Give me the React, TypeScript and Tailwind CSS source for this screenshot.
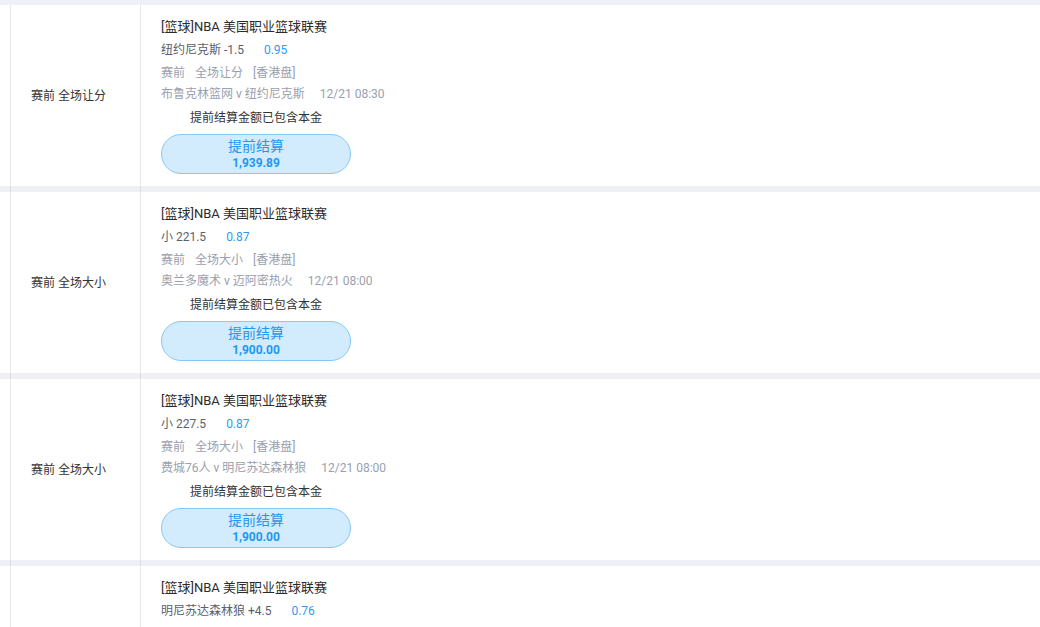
const bets = [
  {
    market: "赛前 全场让分",
    pick: "纽约尼克斯 -1.5",
    odds: "0.95",
    type: "全场让分",
    match: "布鲁克林篮网 v 纽约尼克斯",
    time: "12/21 08:30",
    amount: "1,939.89",
  },
  {
    market: "赛前 全场大小",
    pick: "小 221.5",
    odds: "0.87",
    type: "全场大小",
    match: "奥兰多魔术 v 迈阿密热火",
    time: "12/21 08:00",
    amount: "1,900.00",
  },
  {
    market: "赛前 全场大小",
    pick: "小 227.5",
    odds: "0.87",
    type: "全场大小",
    match: "费城76人 v 明尼苏达森林狼",
    time: "12/21 08:00",
    amount: "1,900.00",
  },
  {
    market: "赛前 全场让分",
    pick: "明尼苏达森林狼 +4.5",
    odds: "0.76",
    type: "全场让分",
    match: "明尼苏达森林狼 v 俄克拉荷马雷霆",
    time: "12/21 09:00",
    amount: "1,520.00",
  },
];

function Gap() {
  return (
    <div className="h-[6px] bg-[#eff0f5]">
      <div className="ml-[10px] h-full w-[131px] border-x border-[#dcdde3]" />
    </div>
  );
}

export default function App() {
  return (
    <div
      className="min-h-screen bg-[#eff0f5] pt-[5px]"
      style={{ fontFamily: "Roboto, 'Noto Sans CJK SC', sans-serif" }}
    >
      {bets.map((bet, i) => (
        <div key={i}>
          <div className="flex h-[181px] bg-white pl-[10px]">
            {/* 玩法 */}
            <div className="flex w-[131px] shrink-0 items-center border-x border-[#e6e7eb] pl-[20px] text-[12px] text-[#333]">
              {bet.market}
            </div>

            {/* 注单详情 */}
            <div className="flex flex-col pl-[20px] pt-[12px]">
              <div className="h-[20px] text-[13px] leading-[20px] text-[#2b2b2b]">
                [篮球]NBA 美国职业篮球联赛
              </div>
              <div className="mt-[3px] flex h-[20px] gap-[20px] text-[12px] leading-[20px]">
                <span className="text-[#5a606c]">{bet.pick}</span>
                <span className="text-[#2d9cf2]">{bet.odds}</span>
              </div>
              <div className="mt-[3px] flex h-[20px] gap-[10px] text-[12px] leading-[20px] text-[#9aa0ad]">
                <span>赛前</span>
                <span>{bet.type}</span>
                <span>[香港盘]</span>
              </div>
              <div className="mt-[1px] flex h-[20px] gap-[15px] text-[12px] leading-[20px] text-[#9aa0ad]">
                <span>{bet.match}</span>
                <span>{bet.time}</span>
              </div>
              <div className="mt-[4px] h-[20px] w-[190px] text-center text-[12px] leading-[20px] text-[#333]">
                提前结算金额已包含本金
              </div>
              <button className="mt-[6px] flex h-[40px] w-[190px] flex-col items-center justify-center rounded-full border border-[#86c8f8] bg-[#d2ebfd] text-[#1f98f0]">
                <span className="text-[14px] leading-[18px]">提前结算</span>
                <span className="text-[12px] font-bold leading-[16px]">{bet.amount}</span>
              </button>
            </div>
          </div>
          <Gap />
        </div>
      ))}
    </div>
  );
}
